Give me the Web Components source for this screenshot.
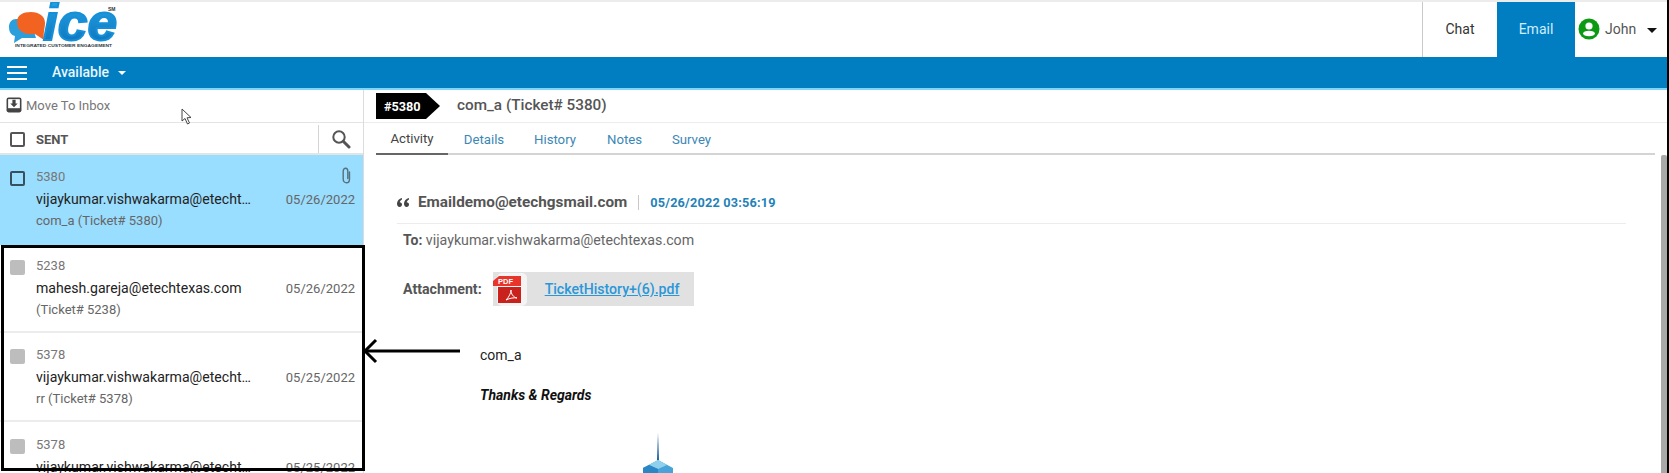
<!DOCTYPE html>
<html>
<head>
<meta charset="utf-8">
<title>ICE Email</title>
<style>
  html, body { margin: 0; height: 100%; overflow: hidden; background: #fff; }
  body { font-family: Roboto, "Liberation Sans", sans-serif; }
</style>
</head>
<body>
<ice-app></ice-app>

<script>
// small helper so every component is written the same way
function define(name, css, html) {
  customElements.define(name, class extends HTMLElement {
    constructor() {
      super();
      this.attachShadow({ mode: 'open' });
    }
    connectedCallback() {
      this.shadowRoot.innerHTML = `<style>${css}</style>${typeof html === 'function' ? html(this) : html}`;
    }
  });
}

define('ice-logo', `
  :host { display: block; width: 120px; height: 50px; }
  svg { display: block; overflow: visible; }
`, `
  <svg width="120" height="50" viewBox="0 0 120 50">
    <defs>
      <linearGradient id="blue" x1="0" y1="0" x2="0" y2="1">
        <stop offset="0" stop-color="#28a8ea"/><stop offset="1" stop-color="#0a6fb8"/>
      </linearGradient>
    </defs>
    <path d="M16 17 C12 17 9 20 9 25 C9 30 11 33 15 34 L14 41 L22 36 L36 36 L30 17 Z" fill="#2b9fdc"/>
    <path d="M17 20 C17 13 23 10 31 10 C39 10 45 14 45 21 C45 26 43 30 44 38 L35 32 C24 33 17 29 17 20 Z" fill="#f26322"/>
    <text x="43" y="38" font-family="'Liberation Sans', sans-serif" font-weight="700" font-style="italic" font-size="52" textLength="74" lengthAdjust="spacingAndGlyphs" stroke="#1590d8" stroke-width="2" fill="url(#blue)">ice</text>
    <text x="108" y="9" font-family="'Liberation Sans', sans-serif" font-weight="700" font-size="5" fill="#333">SM</text>
    <text x="15" y="45" font-family="'Liberation Sans', sans-serif" font-weight="700" font-size="4.4" textLength="97" lengthAdjust="spacingAndGlyphs" fill="#2a3a44">INTEGRATED CUSTOMER ENGAGEMENT</text>
  </svg>
`);

define('ice-header', `
  :host { display: flex; height: 55px; margin-top: 2px; background: #fff; padding-right: 2px; }
  .logo { flex: 1; }
  .tab { width: 74px; padding-bottom: 2px; border-left: 1px solid #c9c9c9; display: flex; align-items: center; justify-content: center;
    font-size: 14px; color: #333; }
  .tab.on { width: 78px; border: 0; background: #017dc1; color: #cfeeff; }
  .user { width: 92px; display: flex; align-items: center; padding: 0 0 1px 3px; box-sizing: border-box; color: #555; font-size: 14px; }
  .user svg { margin-right: 5px; }
  .caret { width: 0; height: 0; border: 5px solid transparent; border-top-color: #111; border-bottom: 0; margin: 3px 0 0 11px; }
`, `
  <div class="logo"><ice-logo></ice-logo></div>
  <div class="tab">Chat</div>
  <div class="tab on">Email</div>
  <div class="user">
    <svg width="22" height="22" viewBox="0 0 22 22">
      <circle cx="11" cy="11" r="10.5" fill="#0c9a14"/>
      <circle cx="11" cy="8" r="3.6" fill="#fff"/>
      <ellipse cx="11" cy="15.5" rx="6" ry="2.8" fill="#fff"/>
    </svg>
    John<span class="caret"></span>
  </div>
`);

define('ice-statusbar', `
  :host { display: flex; align-items: center; height: 31px; box-sizing: content-box; background: #017dc1; border-bottom: 2px solid #7fd6fb;
    color: #e8f6fd; font-size: 14px; font-weight: 500; padding: 0 0 0 7px; }
  .burger { width: 20px; height: 14px; margin-right: 25px; display: flex; flex-direction: column; justify-content: space-between; }
  .burger i { display: block; height: 2px; background: #fff; }
  .label { margin-top: -2px; }
  .caret { width: 0; height: 0; border: 4px solid transparent; border-top-color: #fff; border-bottom: 0; margin: 0 0 0 9px; }
`, `
  <div class="burger"><i></i><i></i><i></i></div>
  <span class="label">Available</span><span class="caret"></span>
`);

define('mail-item', `
  :host { display: flex; flex: none; height: 88px; box-sizing: border-box; border-bottom: 2px solid #ececec; padding: 10px 8px 0 10px;
    background: #fff; color: #666; font-size: 13px; position: relative; }
  :host([selected]) { height: 90px; background: #99ddff; border-bottom: 0; padding-top: 11px; }
  .box { width: 15px; height: 15px; border-radius: 2px; background: #bdbdbd; margin: 5px 11px 0 0; flex: none; box-sizing: border-box; }
  :host([selected]) .box { background: transparent; border: 2px solid #37505f; }
  .body { flex: 1; min-width: 0; }
  .num { height: 21px; line-height: 21px; color: #777; }
  .row { display: flex; justify-content: space-between; height: 22px; line-height: 25px; }
  .from { color: #222; font-size: 14.1px; width: 219px; white-space: nowrap; overflow: hidden; text-overflow: ellipsis; }
  .date { font-size: 13px; color: #666; }
  .subj { height: 22px; line-height: 24px; color: #666; }
  .clip { position: absolute; right: 11px; top: 12px; }
`, (el) => `
  <div class="box"></div>
  <div class="body">
    <div class="num">${el.getAttribute('num')}</div>
    <div class="row"><span class="from">${el.getAttribute('from')}</span><span class="date">${el.getAttribute('date')}</span></div>
    <div class="subj">${el.getAttribute('subject')}</div>
  </div>
  ${el.hasAttribute('clip') ? `<svg class="clip" width="11" height="17" viewBox="0 0 11 17" fill="none" stroke="#55707f" stroke-width="1.4" stroke-linecap="round">
    <path d="M8.5 5 V12 C8.5 14.6 7.3 15.8 5.5 15.8 C3.7 15.8 2.2 14.6 2.2 12 V4.2 C2.2 2.3 3.3 1.2 4.6 1.2 C6 1.2 6.8 2.3 6.8 4.2 V11.5"/>
  </svg>` : ''}
`);

define('mail-list', `
  :host { display: flex; flex-direction: column; width: 364px; flex: none; border-right: 1px solid #dcdcdc; box-sizing: border-box; overflow: hidden; }
  .move { flex: none; height: 32px; padding: 0 0 2px 6px; box-sizing: border-box; display: flex; align-items: center; font-size: 13px; color: #777;
    border-bottom: 1px solid #e4e4e4; height: 33px; }
  .move svg { margin-right: 4px; margin-top: -1px; }
  .head { height: 32px; box-sizing: border-box; padding-top: 2px; display: flex; align-items: center; border-bottom: 2px solid #e4e4e4; flex: none; }
  .check { width: 15px; height: 15px; border: 2px solid #555; border-radius: 2px; box-sizing: border-box; margin: 0 11px 0 10px; }
  .sent { flex: 1; font-size: 13px; font-weight: 700; color: #555; }
  .find { width: 45px; height: 100%; border-left: 1px solid #d4d4d4; display: flex; align-items: center; justify-content: center; box-sizing: border-box; }
`, `
  <div class="move">
    <svg width="16" height="16" viewBox="0 0 15 15">
      <rect x="0.5" y="0.5" width="14" height="14" rx="2" fill="#444"/>
      <rect x="2" y="2" width="11" height="8.5" fill="#fff"/>
      <path d="M6 2.5h3V6h2L7.5 9.5 4 6h2z" fill="#444"/>
    </svg>
    Move To Inbox
  </div>
  <div class="head">
    <div class="check"></div>
    <div class="sent">SENT</div>
    <div class="find">
      <svg width="20" height="20" viewBox="0 0 20 20" fill="none">
        <circle cx="8" cy="8" r="5.7" stroke="#555" stroke-width="2"/>
        <path d="M12.5 12.5 L18 18" stroke="#555" stroke-width="3" stroke-linecap="round"/>
      </svg>
    </div>
  </div>
  <mail-item selected clip num="5380" from="vijaykumar.vishwakarma@etechtexas.com" date="05/26/2022" subject="com_a (Ticket# 5380)"></mail-item>
  <mail-item num="5238" from="mahesh.gareja@etechtexas.com" date="05/26/2022" subject="(Ticket# 5238)"></mail-item>
  <mail-item style="height:89px;padding-top:11px" num="5378" from="vijaykumar.vishwakarma@etechtexas.com" date="05/25/2022" subject="rr (Ticket# 5378)"></mail-item>
  <mail-item style="padding-top:12px" num="5378" from="vijaykumar.vishwakarma@etechtexas.com" date="05/25/2022" subject="rr (Ticket# 5378)"></mail-item>
`);

define('ticket-head', `
  :host { display: flex; align-items: center; height: 32px; border-bottom: 1px solid #ececec; padding-left: 12px; }
  .badge { width: 64px; height: 26px; background: #000; color: #fff; font-size: 12.7px; font-weight: 700; display: flex; align-items: center;
    padding-left: 8px; box-sizing: border-box; clip-path: polygon(0 0, 50px 0, 64px 50%, 50px 100%, 0 100%); margin-right: 17px; }
  .title { font-size: 15.3px; font-weight: 500; color: #555; margin-top: -2px; }
`, `
  <div class="badge">#5380</div>
  <div class="title">com_a (Ticket# 5380)</div>
`);

define('ticket-tabs', `
  :host { display: flex; height: 32px; margin: 0 12px; border-bottom: 2px solid #d4d4d4; box-sizing: border-box; font-size: 13.2px; color: #3b87b5; }
  span { height: 32px; box-sizing: border-box; display: flex; align-items: center; justify-content: center; }
  .on { color: #444; border-bottom: 2px solid #666; }
`, `
  <span class="on" style="width:72px">Activity</span>
  <span style="width:72px">Details</span>
  <span style="width:70px">History</span>
  <span style="width:69px">Notes</span>
  <span style="width:65px">Survey</span>
`);

define('mail-view', `
  :host { display: block; padding: 32px 0 0 33px; color: #555; }
  .from { display: flex; align-items: center; height: 30px; }
  .rule { height: 1px; background: #ececec; margin: 6px 41px 0 0; }
  .quote { margin-right: 9px; }
  .addr { font-size: 15.3px; font-weight: 700; color: #555; }
  .sep { width: 1px; height: 15px; background: #c8c8c8; margin: 0 11px; }
  .when { font-size: 12.7px; font-weight: 700; color: #1f82b8; letter-spacing: .2px; }
  .to { font-size: 14.2px; margin: 6px 0 0 6px; height: 20px; line-height: 20px; color: #666; }
  .to b { font-weight: 700; font-size: 14px; color: #555; }
  .att { display: flex; align-items: center; margin: 22px 0 0 6px; height: 34px; font-size: 14.2px; font-weight: 700; }
  .chip { display: flex; align-items: center; width: 201px; height: 34px; background: #e1e1e1; margin-left: 11px; }
  .chip svg { margin: 0 18px 0 0; }
  a { color: #2a97d8; font-size: 14.1px; font-weight: 500; text-decoration: underline; }
  .msg { margin: 40px 0 0 83px; font-size: 14px; color: #222; }
  .msg p { margin: 0 0 21px; height: 19px; line-height: 19px; }
  .msg p:last-child { margin: 0; }
  .msg em { font-weight: 700; color: #111; }
  .tower { display: block; margin: 28px 0 0 241px; }
`, `
  <div class="from">
    <svg class="quote" width="12" height="9" viewBox="0 0 12 9" fill="#444">
      <path d="M5 0 C2 .8 0 3 0 5.5 C0 7.5 1 9 2.7 9 C4 9 5 8 5 6.6 C5 5.2 4 4.3 2.7 4.3 C3 3 3.8 2 5 1.4 Z"/>
      <path d="M12 0 C9 .8 7 3 7 5.5 C7 7.5 8 9 9.7 9 C11 9 12 8 12 6.6 C12 5.2 11 4.3 9.7 4.3 C10 3 10.8 2 12 1.4 Z"/>
    </svg>
    <span class="addr">Emaildemo@etechgsmail.com</span>
    <span class="sep"></span>
    <span class="when">05/26/2022 03:56:19</span>
  </div>
  <div class="rule"></div>
  <div class="to"><b>To:</b> vijaykumar.vishwakarma@etechtexas.com</div>
  <div class="att">Attachment:
    <div class="chip">
      <svg width="34" height="34" viewBox="0 0 34 34">
        <rect x="4" y="1" width="30" height="33" rx="5" fill="#f4f4f4"/>
        <rect x="5" y="15" width="23" height="16" fill="#c9211b"/>
        <path d="M0 14 L0 9 L6 4 H28 V14 Z" fill="#e8352c"/>
        <text x="5" y="12" font-family="'Liberation Sans', sans-serif" font-size="7.5" font-weight="700" fill="#fff">PDF</text>
        <path d="M13 28 C16 25 18 21 18 18 C18 22 20 25 24 26 C21 25.5 17 26 13 28 Z" fill="none" stroke="#fff" stroke-width="1"/>
      </svg>
      <a>TicketHistory+(6).pdf</a>
    </div>
  </div>
  <div class="msg">
    <p>com_a</p>
    <p><em>Thanks &amp; Regards</em></p>
  </div>
  <svg class="tower" width="40" height="42" viewBox="0 0 40 42">
    <path d="M20 0 L21 27 H19 Z" fill="#1f5f9c"/>
    <path d="M20 27 L35 35 L35 42 H5 V35 Z" fill="#4aa3d8"/>
    <path d="M20 27 L11 32 L20 36 L29 32 Z" fill="#8fd0ee"/>
    <path d="M20 36 V42 H5 V35 L11 32 Z" fill="#2a86c4"/>
  </svg>
`);

define('ice-main', `
  :host { display: block; flex: 1; min-width: 0; position: relative; overflow: hidden; }
  .bar { position: absolute; right: 0; top: 65px; bottom: 0; width: 6px; background: #a9a9a9; border-radius: 2px 2px 0 0; }
`, `
  <ticket-head></ticket-head>
  <ticket-tabs></ticket-tabs>
  <mail-view></mail-view>
  <div class="bar"></div>
`);

define('ice-app', `
  :host { display: block; position: relative; width: 1669px; height: 473px; overflow: hidden; background: #fff; }
  .strip { position: absolute; left: 0; right: 0; top: 0; height: 2px; background: #ececec; }
  .cols { display: flex; height: 383px; padding-right: 2px; }
  .edge { position: absolute; right: 0; top: 0; bottom: 0; width: 2px; background: #000; }
  /* annotation drawn on top of the screenshot */
  .frame { position: absolute; left: 1px; top: 245px; width: 364px; height: 226px; border: 3px solid #000; box-sizing: border-box; }
  .arrow { position: absolute; left: 362px; top: 338px; }
  .cursor { position: absolute; left: 181px; top: 108px; }
`, `
  <div class="strip"></div>
  <ice-header></ice-header>
  <ice-statusbar></ice-statusbar>
  <div class="cols">
    <mail-list></mail-list>
    <ice-main></ice-main>
  </div>
  <div class="frame"></div>
  <svg class="arrow" width="100" height="26" viewBox="0 0 100 26" fill="none" stroke="#000" stroke-width="3">
    <path d="M2 13 H98"/>
    <path d="M14 2 L3 13 L14 24"/>
  </svg>
  <svg class="cursor" width="12" height="17" viewBox="0 0 12 17">
    <path d="M1 1 L1 13 L4 10.5 L6.5 16 L8.5 15 L6 9.8 L10 9.5 Z" fill="#fff" stroke="#444" stroke-width="1"/>
  </svg>
  <div class="edge"></div>
`);
</script>
</body>
</html>
